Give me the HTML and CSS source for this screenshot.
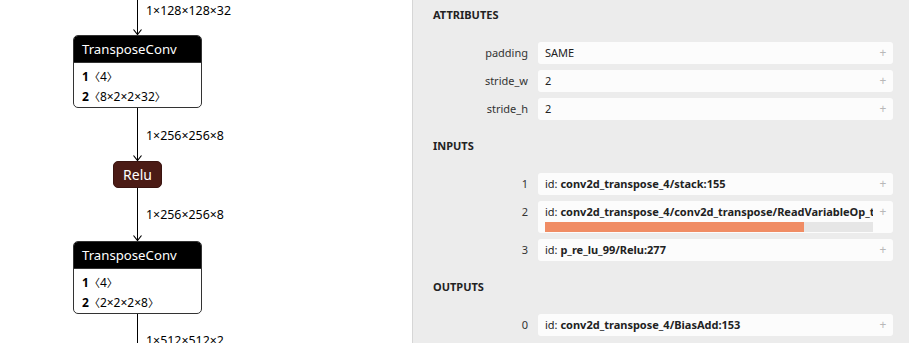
FILE: index.html
```html
<!DOCTYPE html>
<html lang="en">
<head>
  <meta charset="UTF-8" />
  <title>Model graph – TransposeConv</title>
  <link rel="stylesheet" href="styles.css">
</head>
<body>
  <div class="app">
    <!-- graph canvas -->
    <div class="graph">
      <div class="column">
        <div class="edge edge-top">
          <div class="line"></div>
          <svg class="arrow" width="9" height="6" viewBox="0 0 9 6"><path d="M0.5 0.5 L4.5 5.5 L8.5 0.5" /></svg>
          <span class="edge-label">1×128×128×32</span>
        </div>

        <div class="node">
          <div class="node-title">TransposeConv</div>
          <div class="node-body">
            <div class="attr"><b>1</b><span class="br">〈</span>4<span class="br">〉</span></div>
            <div class="attr"><b>2</b><span class="br">〈</span>8×2×2×32<span class="br">〉</span></div>
          </div>
        </div>

        <div class="edge edge-mid">
          <div class="line"></div>
          <svg class="arrow" width="9" height="6" viewBox="0 0 9 6"><path d="M0.5 0.5 L4.5 5.5 L8.5 0.5" /></svg>
          <span class="edge-label">1×256×256×8</span>
        </div>

        <div class="op">Relu</div>

        <div class="edge edge-mid2">
          <div class="line"></div>
          <svg class="arrow" width="9" height="6" viewBox="0 0 9 6"><path d="M0.5 0.5 L4.5 5.5 L8.5 0.5" /></svg>
          <span class="edge-label">1×256×256×8</span>
        </div>

        <div class="node">
          <div class="node-title">TransposeConv</div>
          <div class="node-body">
            <div class="attr"><b>1</b><span class="br">〈</span>4<span class="br">〉</span></div>
            <div class="attr"><b>2</b><span class="br">〈</span>2×2×2×8<span class="br">〉</span></div>
          </div>
        </div>

        <div class="edge edge-bottom">
          <div class="line"></div>
          <span class="edge-label">1×512×512×2</span>
        </div>
      </div>
    </div>

    <!-- properties sidebar -->
    <aside class="sidebar">
      <section class="section">
        <div class="section-title">ATTRIBUTES</div>
        <div class="rows">
          <div class="row">
            <div class="row-name">padding</div>
            <div class="row-value"><span class="text">SAME</span><span class="plus">+</span></div>
          </div>
          <div class="row">
            <div class="row-name">stride_w</div>
            <div class="row-value"><span class="text">2</span><span class="plus">+</span></div>
          </div>
          <div class="row">
            <div class="row-name">stride_h</div>
            <div class="row-value"><span class="text">2</span><span class="plus">+</span></div>
          </div>
        </div>
      </section>

      <section class="section">
        <div class="section-title">INPUTS</div>
        <div class="rows">
          <div class="row">
            <div class="row-name">1</div>
            <div class="row-value"><span class="text">id: <b>conv2d_transpose_4/stack:155</b></span><span class="plus">+</span></div>
          </div>
          <div class="row">
            <div class="row-name">2</div>
            <div class="row-value tall">
              <div class="tall-main">
                <span class="text">id: <b>conv2d_transpose_4/conv2d_transpose/ReadVariableOp_transpose</b></span>
                <div class="bar"><div class="bar-fill"></div></div>
              </div>
              <span class="plus">+</span>
            </div>
          </div>
          <div class="row">
            <div class="row-name">3</div>
            <div class="row-value"><span class="text">id: <b>p_re_lu_99/Relu:277</b></span><span class="plus">+</span></div>
          </div>
        </div>
      </section>

      <section class="section">
        <div class="section-title">OUTPUTS</div>
        <div class="rows">
          <div class="row">
            <div class="row-name">0</div>
            <div class="row-value"><span class="text">id: <b>conv2d_transpose_4/BiasAdd:153</b></span><span class="plus">+</span></div>
          </div>
        </div>
      </section>
    </aside>
  </div>
</body>
</html>
```

FILE: styles.css
```css
/* page */
body {
  margin: 0;
  font-family: 'Noto Sans', 'Open Sans', 'DejaVu Sans', sans-serif;
  color: #222;
  background: #ffffff;
  overflow: hidden;
}

.app {
  display: flex;
  width: 909px;
  height: 343px;
  overflow: hidden;
}

/* graph canvas */
.graph {
  width: 412px;
  flex-shrink: 0;
  background: #ffffff;
  border-right: 1px solid #d6d6d6;
}

.column {
  width: 129px;
  margin-left: 73px;
  display: flex;
  flex-direction: column;
  align-items: center;
}

.edge {
  position: relative;
  display: flex;
  flex-direction: column;
  align-items: center;
  width: 100%;
}
.edge .line {
  flex: 1;
  width: 1px;
  background: #000;
}
.edge .arrow {
  display: block;
  margin-top: -6px;
}
.edge .arrow path {
  fill: none;
  stroke: #000;
  stroke-width: 1.2;
}
.edge-label {
  position: absolute;
  left: 73px;
  font-size: 12.4px;
  line-height: 16px;
  color: #000;
  white-space: nowrap;
}

.edge-top { height: 35px; }
.edge-top .edge-label { top: 3px; }
.edge-mid { height: 53px; }
.edge-mid .edge-label { top: 20px; }
.edge-mid2 { height: 53px; }
.edge-mid2 .edge-label { top: 19px; }
.edge-bottom { height: 40px; }
.edge-bottom .edge-label { top: 19px; }

/* nodes */
.node {
  width: 100%;
  box-sizing: border-box;
  border: 1px solid #333;
  border-radius: 5px;
  overflow: hidden;
  background: #fff;
}
.node-title {
  height: 26px;
  line-height: 26px;
  padding: 0 8px;
  background: #000;
  color: #fff;
  font-size: 13.2px;
  border-bottom: 1px solid #333;
}
.node-body {
  padding: 4px 8px 0;
  font-size: 12px;
  line-height: 20px;
  color: #000;
}
.node-body .attr {
  height: 20px;
  overflow: hidden;
}
.node-body .br {
  font-family: 'Noto Sans CJK JP', 'DejaVu Sans', sans-serif;
  font-size: 11px;
  line-height: 1;
}

.op {
  width: 49px;
  height: 27px;
  box-sizing: border-box;
  border: 1px solid #3a1410;
  border-radius: 5px;
  background: #4b1b15;
  color: #fff;
  font-size: 14px;
  line-height: 25px;
  text-align: center;
}

/* sidebar */
.sidebar {
  flex: 1;
  min-width: 0;
  overflow: hidden;
  background: #ececec;
  padding: 0 16px 0 20px;
  font-size: 11px;
}

.section {
  padding: 5px 0 11px;
}
.section-title {
  font-weight: bold;
  font-size: 11px;
  line-height: 20px;
  margin-bottom: 17px;
  color: #222;
}

.rows {
  display: flex;
  flex-direction: column;
  gap: 6px;
}
.row {
  display: flex;
  gap: 10px;
  min-width: 0;
}
.row-name {
  width: 95px;
  flex-shrink: 0;
  text-align: right;
  line-height: 22px;
  color: #333;
}
.row-value {
  flex: 1;
  min-width: 0;
  display: flex;
  align-items: flex-start;
  background: #fcfcfc;
  border-radius: 3px;
  padding: 0 6px 0 7px;
  line-height: 22px;
}
.row-value .text {
  flex: 1;
  min-width: 0;
  white-space: nowrap;
  overflow: hidden;
  color: #222;
}
.row-value b {
  color: #222;
}
.plus {
  width: 8px;
  flex-shrink: 0;
  text-align: center;
  color: #b8b8b8;
  font-size: 12px;
  margin-left: 6px;
}

.row-value.tall {
  height: 32px;
}
.tall-main {
  flex: 1;
  min-width: 0;
  display: flex;
  flex-direction: column;
}
.tall-main .text {
  line-height: 21px;
}
.bar {
  height: 10px;
  background: #e6e6e6;
}
.bar-fill {
  width: 79%;
  height: 100%;
  background: #f08c64;
}
```
